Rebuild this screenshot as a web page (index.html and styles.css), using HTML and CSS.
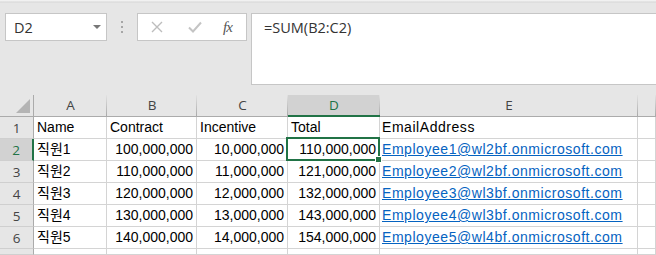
FILE: index.html
```html
<!DOCTYPE html>
<html lang="ko">
<head>
    <meta charset="UTF-8">
    <title>Sheet</title>
    <link rel="stylesheet" href="styles.css">
</head>
<body>
<div class="topbar"></div>

<div class="formula-row">
    <div class="name-box">
        <span>D2</span>
        <span class="caret"></span>
    </div>
    <div class="grip"><i></i><i></i><i></i></div>
    <div class="fx-buttons">
        <svg class="btn-x" width="12" height="12" viewBox="0 0 12 12">
            <path d="M1 1 L11 11 M11 1 L1 11" stroke="#bdbdbd" stroke-width="1.4" fill="none"/>
        </svg>
        <svg class="btn-ok" width="14" height="12" viewBox="0 0 14 12">
            <path d="M1 6.5 L5 10.5 L13 1.5" stroke="#c4c4c4" stroke-width="2" fill="none"/>
        </svg>
        <span class="fx">fx</span>
    </div>
    <div class="formula">=SUM(B2:C2)</div>
</div>

<!-- grid: header row + 7 rows -->
<div class="sheet">
    <div class="hd corner"><span class="tri"></span></div>
    <div class="hd">A</div>
    <div class="hd">B</div>
    <div class="hd">C</div>
    <div class="hd sel-col">D</div>
    <div class="hd">E</div>
    <div class="hd"></div>

    <div class="rh">1</div>
    <div class="c">Name</div>
    <div class="c">Contract</div>
    <div class="c">Incentive</div>
    <div class="c">Total</div>
    <div class="c mail">EmailAddress</div>
    <div class="c"></div>

    <div class="rh sel-row">2</div>
    <div class="c">직원1</div>
    <div class="c num">100,000,000</div>
    <div class="c num">10,000,000</div>
    <div class="c num active">110,000,000<span class="cursor"><i class="handle"></i></span></div>
    <div class="c mail"><a href="#">Employee1@wl2bf.onmicrosoft.com</a></div>
    <div class="c"></div>

    <div class="rh">3</div>
    <div class="c">직원2</div>
    <div class="c num">110,000,000</div>
    <div class="c num">11,000,000</div>
    <div class="c num">121,000,000</div>
    <div class="c mail"><a href="#">Employee2@wl2bf.onmicrosoft.com</a></div>
    <div class="c"></div>

    <div class="rh">4</div>
    <div class="c">직원3</div>
    <div class="c num">120,000,000</div>
    <div class="c num">12,000,000</div>
    <div class="c num">132,000,000</div>
    <div class="c mail"><a href="#">Employee3@wl3bf.onmicrosoft.com</a></div>
    <div class="c"></div>

    <div class="rh">5</div>
    <div class="c">직원4</div>
    <div class="c num">130,000,000</div>
    <div class="c num">13,000,000</div>
    <div class="c num">143,000,000</div>
    <div class="c mail"><a href="#">Employee4@wl3bf.onmicrosoft.com</a></div>
    <div class="c"></div>

    <div class="rh">6</div>
    <div class="c">직원5</div>
    <div class="c num">140,000,000</div>
    <div class="c num">14,000,000</div>
    <div class="c num">154,000,000</div>
    <div class="c mail"><a href="#">Employee5@wl4bf.onmicrosoft.com</a></div>
    <div class="c"></div>

    <div class="rh"></div>
    <div class="c"></div>
    <div class="c"></div>
    <div class="c"></div>
    <div class="c"></div>
    <div class="c"></div>
    <div class="c"></div>
</div>
</body>
</html>
```

FILE: styles.css
```css
html, body {
    margin: 0;
    height: 100%;
    overflow: hidden;
}

body {
    background-color: #e6e6e6;
    font-family: "Open Sans", "Noto Sans", sans-serif;
    color: #333;
}

.topbar {
    height: 3px;
    background: linear-gradient(#f1f1f1, #f1f1f1 1px, #d6d6d6 2px, #e6e6e6);
}

.formula-row {
    display: flex;
    align-items: flex-start;
    padding: 10px 0 0 5px;
    height: 72px;
    margin-bottom: 10px;
}

.name-box {
    box-sizing: border-box;
    width: 102px;
    height: 28px;
    background: #fff;
    border: 1px solid #c6c6c6;
    display: flex;
    align-items: center;
    justify-content: space-between;
    padding: 0 5px 0 8px;
    font-size: 14.5px;
}

.caret {
    width: 0;
    height: 0;
    border-left: 4px solid transparent;
    border-right: 4px solid transparent;
    border-top: 4px solid #777;
    margin-top: -1px;
}

.grip {
    width: 30px;
    height: 28px;
    display: flex;
    flex-direction: column;
    align-items: center;
    justify-content: center;
    gap: 3px;
}

.grip i {
    display: block;
    width: 2px;
    height: 2px;
    background: #a6a6a6;
}

.fx-buttons {
    box-sizing: border-box;
    width: 110px;
    height: 28px;
    background: #fff;
    border: 1px solid #c6c6c6;
    display: flex;
    align-items: center;
    padding-left: 13px;
}

.btn-ok {
    margin-left: 25px;
}

.fx {
    margin-left: 21px;
    font-family: "Liberation Serif", serif;
    font-style: italic;
    font-size: 15px;
    color: #555;
    letter-spacing: -1px;
}

.formula {
    box-sizing: border-box;
    flex: 1;
    margin-left: 4px;
    height: 72px;
    background: #fff;
    border: 1px solid #c6c6c6;
    border-right: 0;
    padding: 4px 0 0 12px;
    font-size: 14.5px;
    color: #333;
}

/* sheet grid */
.sheet {
    display: grid;
    grid-template-columns: 34px 73px 90px 91px 92px 258px minmax(0, 1fr);
    grid-template-rows: repeat(7, 22px) 6px;
    overflow: hidden;
    font-family: "Liberation Sans", "Noto Sans CJK KR", sans-serif;
    font-size: 14px;
    color: #000;
}

.hd {
    box-sizing: border-box;
    border-bottom: 1px solid #ababab;
    background: linear-gradient(#e2e2e2, #a9a9a9) right / 1px 100% no-repeat, #e6e6e6;
    text-align: center;
    line-height: 21px;
    font-family: "Open Sans", "Noto Sans", sans-serif;
    font-size: 13.5px;
    color: #444;
}

.corner {
    position: relative;
    background: #e6e6e6;
    border-right: 1px solid #ababab;
}

.tri {
    position: absolute;
    right: 3px;
    bottom: 3px;
    width: 0;
    height: 0;
    border-left: 14px solid transparent;
    border-bottom: 14px solid #b4b4b4;
}

.sel-col {
    background-color: #d2d2d2;
    border-bottom: 2px solid #217346;
    color: #217346;
}

.rh {
    box-sizing: border-box;
    background: #e6e6e6;
    border-right: 1px solid #ababab;
    border-bottom: 1px solid #cfcfcf;
    text-align: center;
    line-height: 22px;
    font-family: "Open Sans", "Noto Sans", sans-serif;
    font-size: 13.5px;
    color: #444;
}

.sel-row {
    background: #d2d2d2;
    border-right: 2px solid #217346;
    color: #217346;
}

.c {
    box-sizing: border-box;
    background: #fff;
    border-right: 1px solid #d4d4d4;
    border-bottom: 1px solid #d4d4d4;
    padding: 0 3px;
    line-height: 21px;
    white-space: nowrap;
    overflow: hidden;
}

.num {
    text-align: right;
}

.mail {
    padding-left: 2px;
    letter-spacing: 0.55px;
}

.c a {
    color: #0563c1;
}

.active {
    position: relative;
    overflow: visible;
}

.cursor {
    position: absolute;
    top: -2px;
    left: -2px;
    right: -1px;
    bottom: -1px;
    border: 2px solid #217346;
}

.handle {
    position: absolute;
    right: -4px;
    bottom: -4px;
    width: 5px;
    height: 5px;
    background: #217346;
    border: 1px solid #fff;
}
```
